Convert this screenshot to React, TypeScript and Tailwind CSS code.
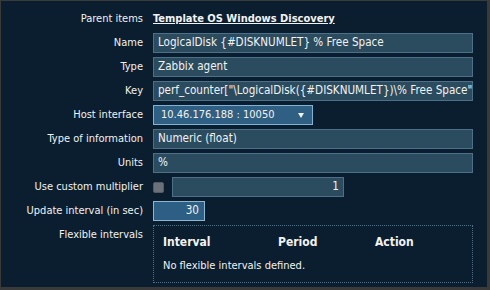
import React from "react";

const font = { fontFamily: '"DejaVu Sans Condensed", "DejaVu Sans", sans-serif' };

const Row = ({ label, children }: { label: string; children: React.ReactNode }) => (
  <div className="flex items-center h-5">
    <div className="w-[142px] shrink-0 text-right">{label}</div>
    <div className="ml-[10px] flex items-center flex-1">{children}</div>
  </div>
);

const Field = ({ value, className = "" }: { value: string; className?: string }) => (
  <div
    className={`h-5 flex items-center px-[4px] text-[11.6px] bg-[#2b4b5f] border border-[#4b7088] whitespace-nowrap overflow-hidden ${className}`}
  >
    {value}
  </div>
);

export default function App() {
  return (
    <div className="w-[490px] h-[290px] bg-[#3a3a3a] pr-[3px] pb-[3px] pl-[1px] pt-[1px]">
      <div
        className="w-full h-full bg-[#0b1e2f] text-[#f2f2f2] text-[11px] pt-[8px] flex flex-col gap-1"
        style={font}
      >
        <Row label="Parent items">
          <span className="font-bold underline">Template OS Windows Discovery</span>
        </Row>
        <Row label="Name">
          <Field value="LogicalDisk {#DISKNUMLET} % Free Space" className="w-[320px]" />
        </Row>
        <Row label="Type">
          <Field value="Zabbix agent" className="w-[320px]" />
        </Row>
        <Row label="Key">
          <Field value={'perf_counter["\\LogicalDisk({#DISKNUMLET})\\% Free Space"'} className="w-[320px]" />
        </Row>
        <Row label="Host interface">
          <div className="h-5 w-[160px] flex items-center justify-between pl-[7px] pr-[8px] bg-[#2f5f82] border border-[#7fb3d5]">
            <span>10.46.176.188 : 10050</span>
            <svg width="6" height="5" viewBox="0 0 6 5">
              <path d="M0 0 H6 L3 5 Z" fill="#f2f2f2" />
            </svg>
          </div>
        </Row>
        <Row label="Type of information">
          <Field value="Numeric (float)" className="w-[320px]" />
        </Row>
        <Row label="Units">
          <Field value="%" className="w-[320px]" />
        </Row>
        <Row label="Use custom multiplier">
          <div className="w-[11px] h-[11px] rounded-[2px] bg-[#6b7178] border border-[#555b62]" />
          <Field value="1" className="ml-[8px] w-[172px] justify-end" />
        </Row>
        <Row label="Update interval (in sec)">
          <div className="h-5 w-[52px] flex items-center justify-end px-[5px] text-[11.6px] bg-[#2d5f85] border border-[#8fb6cf]">
            30
          </div>
        </Row>
        <div className="flex">
          <div className="w-[142px] shrink-0 text-right pt-[2px]">Flexible intervals</div>
          <div className="ml-[10px] w-[320px] h-[58px] border border-dotted border-[#4f6f85] px-[9px] pt-[7px]">
            <div className="flex font-bold text-[12px]">
              <span className="w-[115px]">Interval</span>
              <span className="w-[97px]">Period</span>
              <span>Action</span>
            </div>
            <div className="mt-[7px]">No flexible intervals defined.</div>
          </div>
        </div>
      </div>
    </div>
  );
}
